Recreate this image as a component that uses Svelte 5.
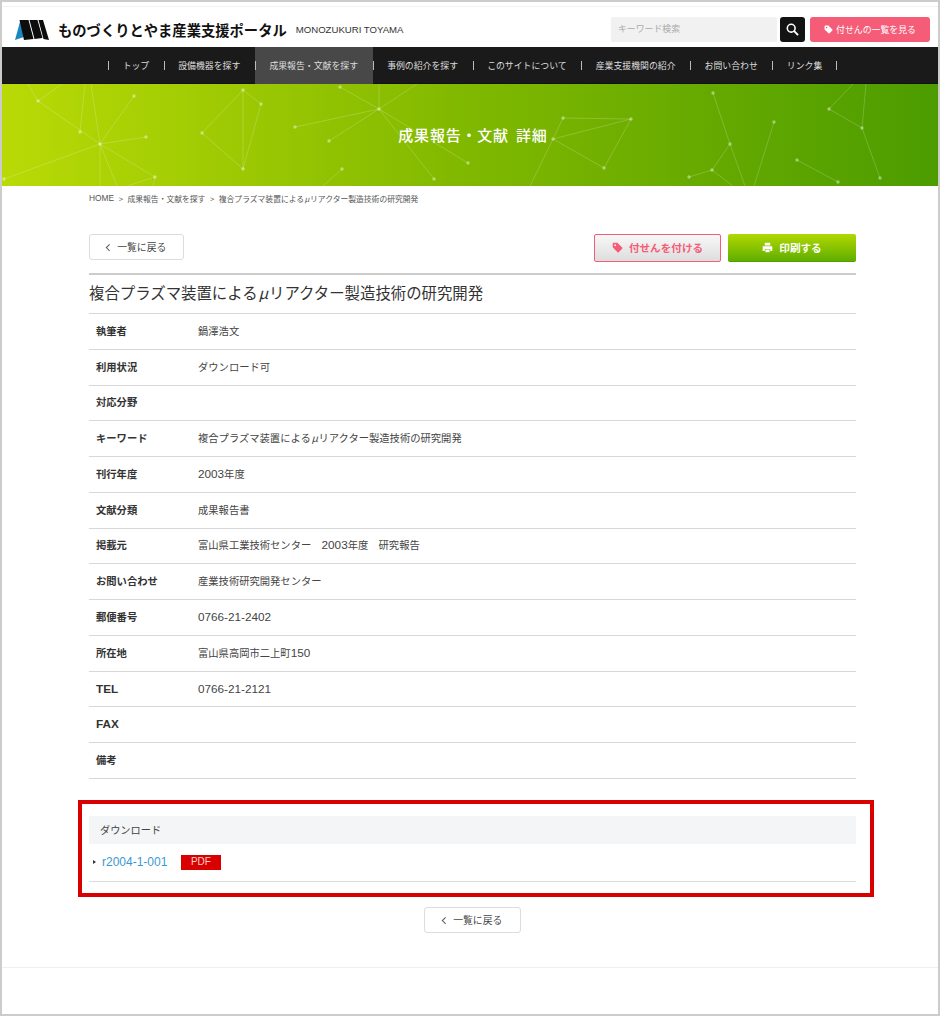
<script>
  const navItems = ['トップ', '設備機器を探す', '成果報告・文献を探す', '事例の紹介を探す', 'このサイトについて', '産業支援機関の紹介', 'お問い合わせ', 'リンク集'];
  const activeNav = '成果報告・文献を探す';
  const title = '複合プラズマ装置によるμリアクター製造技術の研究開発';

  const rows = [
    ['執筆者', '鍋澤浩文'],
    ['利用状況', 'ダウンロード可'],
    ['対応分野', ''],
    ['キーワード', title],
    ['刊行年度', '2003年度'],
    ['文献分類', '成果報告書'],
    ['掲載元', '富山県工業技術センター　2003年度　研究報告'],
    ['お問い合わせ', '産業技術研究開発センター'],
    ['郵便番号', '0766-21-2402'],
    ['所在地', '富山県高岡市二上町150'],
    ['TEL', '0766-21-2121'],
    ['FAX', ''],
    ['備考', '']
  ];

  // latin and digits sit larger than the kana in the original, mu is slanted
  const runs = (text) =>
    text
      .split(/([A-Za-z0-9-]+|μ)/)
      .filter(Boolean)
      .map((t) => ({ t, cls: t === 'μ' ? 'mu' : /^[A-Za-z0-9-]+$/.test(t) ? 'latin' : '' }));

  // banner constellation, coordinates relative to the banner box
  const dots = [
    [38, 17], [134, 12], [80, 48], [100, 60], [146, 53], [4, 95], [155, 93],
    [243, 6], [261, 20], [202, 49], [243, 85],
    [379, 25], [295, 43], [329, 57], [340, 3], [342, 85], [434, 95], [468, 79],
    [563, 34], [631, 35], [553, 55], [604, 84],
    [713, 9], [730, 60], [712, 86], [689, 93], [774, 38],
    [829, 25], [862, 44], [880, 94], [797, 76], [838, 98]
  ];
  const lines = [
    [28, 0, 38, 17], [38, 17, 62, 0], [38, 17, 100, 60], [100, 60, 91, 0], [80, 48, 85, 0],
    [100, 60, 134, 12], [100, 60, 146, 53], [100, 60, 4, 95], [100, 60, 155, 93],
    [100, 60, 100, 102], [100, 60, 117, 102], [155, 93, 127, 102], [155, 93, 153, 102],
    [243, 6, 261, 20], [243, 6, 202, 49], [243, 6, 243, 85], [261, 20, 243, 85], [202, 49, 243, 85],
    [379, 25, 295, 43], [379, 25, 329, 57], [379, 25, 340, 3], [379, 25, 379, 0], [379, 25, 417, 0],
    [379, 25, 434, 95], [342, 85, 323, 102], [379, 25, 468, 79],
    [563, 34, 631, 35], [631, 35, 553, 55], [631, 35, 604, 84], [553, 55, 604, 84], [553, 55, 563, 34], [553, 55, 530, 102],
    [713, 9, 730, 60], [730, 60, 745, 102], [730, 60, 712, 86], [712, 86, 689, 93], [712, 86, 733, 102], [774, 38, 754, 102],
    [829, 25, 853, 0], [862, 44, 866, 0], [829, 25, 862, 44], [862, 44, 880, 94], [797, 76, 838, 98]
  ];
</script>

{#snippet tagIcon(size)}
  <svg width={size} height={size} viewBox="0 0 16 16"><path fill="currentColor" d="M1 2.2 2.2 1h5.6l7 7a1.3 1.3 0 0 1 0 1.8l-5 5a1.3 1.3 0 0 1-1.8 0l-7-7zM4.6 3.2a1.4 1.4 0 1 0 0 2.8 1.4 1.4 0 0 0 0-2.8z" fill-rule="evenodd"/></svg>
{/snippet}

{#snippet backButton()}
  <a class="back" href="#top"><span class="chev"></span>一覧に戻る</a>
{/snippet}

{#snippet mixed(text)}
  {#each runs(text) as run}<span class={run.cls}>{run.t}</span>{/each}
{/snippet}

<div class="frame">
  <header class="header">
    <div class="brand">
      <svg class="logo" width="35" height="22" viewBox="0 0 35 22">
        <polygon fill="#1b87c0" points="0,21 5.5,1 9,1 9,18" />
        <polygon fill="#0d0d0d" points="4.5,1 13.5,1 18.5,20 9,21" />
        <polygon fill="#0d0d0d" points="14.5,1 22.5,1 27.5,19 19.5,20" />
        <polygon fill="#0d0d0d" points="23.5,1 28,1 34,21 28.5,20" />
      </svg>
      <span class="brand-name">ものづくりとやま産業支援ポータル</span>
      <span class="brand-en">MONOZUKURI TOYAMA</span>
    </div>
    <div class="tools">
      <div class="search">キーワード検索</div>
      <button class="search-btn" aria-label="検索">
        <svg width="13" height="13" viewBox="0 0 14 14"><circle cx="5.6" cy="5.6" r="4.2" fill="none" stroke="#fff" stroke-width="1.7"/><path d="M8.8 8.8 13 13" stroke="#fff" stroke-width="2.1"/></svg>
      </button>
      <a class="tag-list" href="#top">{@render tagIcon(9)}付せんの一覧を見る</a>
    </div>
  </header>

  <nav class="nav">
    {#each navItems as item}
      <a class="nav-item" class:active={item === activeNav} href="#top">{item}</a>
    {/each}
  </nav>

  <div class="banner">
    <svg class="network" width="936" height="102" viewBox="2 0 936 102">
      {#each lines as [x1, y1, x2, y2]}
        <line {x1} {y1} {x2} {y2} stroke="#fff" stroke-opacity="0.24" stroke-width="0.8" />
      {/each}
      {#each dots as [cx, cy]}
        <circle {cx} {cy} r="1.7" fill="#fff" fill-opacity="0.42" />
      {/each}
    </svg>
    <h1>成果報告・文献 詳細</h1>
  </div>

  <main class="main">
    <div class="crumbs">
      <span>HOME</span><i>&gt;</i><span>成果報告・文献を探す</span><i>&gt;</i><span>{@render mixed(title)}</span>
    </div>

    <div class="actions">
      {@render backButton()}
      <div class="action-right">
        <a class="btn-tag" href="#top">{@render tagIcon(11)}付せんを付ける</a>
        <a class="btn-print" href="#top">
          <svg width="11" height="11" viewBox="0 0 16 16"><path fill="currentColor" d="M4 1h8v4H4zM1 6h14v7h-3v-3H4v3H1zM5 11h6v4H5z"/></svg>
          印刷する
        </a>
      </div>
    </div>

    <h2 class="title">{@render mixed(title)}</h2>

    <div class="table">
      {#each rows as [label, value]}
        <div class="row">
          <div class="label">{@render mixed(label)}</div>
          <div class="value">{@render mixed(value)}</div>
        </div>
      {/each}
    </div>

    <section class="download">
      <h3>ダウンロード</h3>
      <div class="file">
        <span class="marker"></span>
        <a href="#top">r2004-1-001</a>
        <span class="pdf">PDF</span>
      </div>
    </section>

    <div class="bottom-back">
      {@render backButton()}
    </div>
  </main>

  <footer class="footer"></footer>
</div>

<style>
  :global(body) {
    margin: 0;
    background: #fff;
  }

  .frame {
    box-sizing: border-box;
    width: 940px;
    height: 1016px;
    border: 2px solid #ccc;
    overflow: hidden;
    font-family: "Noto Sans CJK JP", "Noto Sans", sans-serif;
    color: #333;
    background: #fff;
  }

  a {
    text-decoration: none;
    color: inherit;
  }

  .header {
    box-sizing: border-box;
    height: 41px;
    display: flex;
    align-items: center;
    justify-content: space-between;
    padding: 5px 8px 0 13px;
    border-top: 1px solid #f2f2f2;
    margin-top: 4px;
  }

  .brand {
    display: flex;
    align-items: center;
  }

  .logo {
    margin-right: 8px;
  }

  .brand-name {
    font-size: 14.3px;
    font-weight: 700;
    color: #111;
    line-height: 22px;
    white-space: nowrap;
  }

  .brand-en {
    font-family: "Liberation Sans", sans-serif;
    font-size: 9.6px;
    color: #333;
    margin-left: 9px;
    white-space: nowrap;
  }

  .tools {
    display: flex;
    align-items: center;
    margin-top: -1px;
  }

  .search {
    box-sizing: border-box;
    width: 166px;
    height: 25px;
    padding-left: 7px;
    line-height: 24px;
    font-size: 8.9px;
    color: #aaa;
    background: #f1f1f1;
    border-radius: 2px;
  }

  .search-btn {
    box-sizing: border-box;
    width: 25px;
    height: 25px;
    margin-left: 3px;
    padding: 0;
    border: 0;
    border-radius: 3px;
    background: #131313;
    display: flex;
    align-items: center;
    justify-content: center;
  }

  .tag-list {
    box-sizing: border-box;
    width: 120px;
    height: 25px;
    margin-left: 5px;
    display: flex;
    align-items: center;
    justify-content: center;
    gap: 3px;
    font-size: 8.9px;
    color: #fff;
    background: #f45c77;
    border-radius: 3px;
  }

  .nav {
    height: 37px;
    display: flex;
    justify-content: center;
    background: #1a1a1a;
    padding-left: 5px;
    box-shadow: inset 0 -1px 0 #111;
  }

  .nav-item {
    position: relative;
    display: flex;
    align-items: center;
    padding: 0 14.5px;
    font-size: 8.9px;
    color: #ddd;
    white-space: nowrap;
  }

  .nav-item.active {
    background: #484848;
  }

  .nav-item::before,
  .nav-item:last-child::after {
    content: "";
    position: absolute;
    left: 0;
    top: 14px;
    width: 1px;
    height: 9px;
    background: #bbb;
  }

  .nav-item:last-child::after {
    left: auto;
    right: 0;
  }

  .banner {
    position: relative;
    height: 102px;
    display: flex;
    align-items: center;
    justify-content: center;
    overflow: hidden;
    background: linear-gradient(90deg, #b9da06 0%, #80b800 50%, #4c9c00 100%);
  }

  .network {
    position: absolute;
    inset: 0;
  }

  .banner h1 {
    position: relative;
    margin: 0 0 2px 6px;
    font-size: 15px;
    font-weight: 500;
    letter-spacing: 0.8px;
    word-spacing: 3px;
    color: #fff;
  }

  .main {
    width: 767px;
    margin-left: 87px;
  }

  .crumbs {
    height: 24px;
    display: flex;
    align-items: center;
    font-size: 7.8px;
    color: #555;
    white-space: nowrap;
  }

  .crumbs > span:first-child {
    font-family: "Liberation Sans", sans-serif;
    font-size: 8.4px;
  }

  .crumbs i {
    font-style: normal;
    margin: 0 4.5px;
  }

  .actions {
    display: flex;
    justify-content: space-between;
    align-items: flex-start;
    margin-top: 24px;
  }

  .back {
    box-sizing: border-box;
    width: 95px;
    height: 26px;
    display: flex;
    align-items: center;
    justify-content: center;
    gap: 6px;
    font-size: 9.8px;
    color: #444;
    background: #fff;
    border: 1px solid #dcdcdc;
    border-radius: 3px;
  }

  .chev {
    width: 3.5px;
    height: 3.5px;
    border-left: 1px solid #555;
    border-bottom: 1px solid #555;
    transform: rotate(45deg);
  }

  .action-right {
    display: flex;
    gap: 7px;
  }

  .btn-tag,
  .btn-print {
    box-sizing: border-box;
    height: 28px;
    padding-bottom: 1px;
    display: flex;
    align-items: center;
    justify-content: center;
    gap: 6px;
    font-size: 10.6px;
    font-weight: 700;
    border-radius: 2px;
  }

  .btn-tag {
    width: 127px;
    color: #f45c77;
    border: 1.5px solid #f45c77;
    background: linear-gradient(180deg, #f8f8f8, #dddddd);
  }

  .btn-print {
    width: 128px;
    color: #fff;
    background: linear-gradient(180deg, #b2d800, #60ae00);
    border-bottom: 1px solid #4fa000;
  }

  .title {
    box-sizing: border-box;
    height: 41px;
    margin: 11px 0 0;
    padding-bottom: 5px;
    display: flex;
    align-items: center;
    font-size: 15.4px;
    font-weight: 400;
    color: #333;
    border-top: 2px solid #ccc;
    border-bottom: 1px solid #d8d8d8;
    white-space: nowrap;
  }

  .row {
    box-sizing: border-box;
    height: 35.77px;
    padding-bottom: 2px;
    display: grid;
    grid-template-columns: 102px 1fr;
    align-items: center;
    padding-left: 7px;
    border-bottom: 1px solid #d8d8d8;
    font-size: 10.3px;
  }

  .label {
    font-weight: 700;
    color: #333;
  }

  .value {
    color: #444;
  }

  .latin {
    font-family: "Liberation Sans", sans-serif;
    font-size: 1.14em;
  }

  .mu {
    font-style: italic;
    margin: 0 0.06em;
  }

  .download {
    position: relative;
    margin-top: 37px;
  }

  /* red annotation frame around the download block */
  .download::after {
    content: "";
    position: absolute;
    inset: -16px -18px -15px -11px;
    border: 4px solid #d90000;
    pointer-events: none;
  }

  .download h3 {
    height: 28px;
    margin: 0;
    padding-left: 11px;
    line-height: 27px;
    font-size: 10.2px;
    font-weight: 400;
    color: #444;
    background: #f4f5f7;
  }

  .file {
    height: 37px;
    display: flex;
    align-items: center;
    padding-left: 4px;
    border-bottom: 1px solid #ddd;
  }

  .marker {
    width: 0;
    height: 0;
    margin-right: 6px;
    border-left: 3px solid #333;
    border-top: 2px solid transparent;
    border-bottom: 2px solid transparent;
  }

  .file a {
    font-family: "Liberation Sans", sans-serif;
    font-size: 12px;
    color: #3b99d3;
  }

  .pdf {
    box-sizing: border-box;
    width: 40px;
    height: 15px;
    margin-left: 13.5px;
    text-align: center;
    line-height: 14px;
    font-family: "Liberation Sans", sans-serif;
    font-size: 10px;
    color: #fbd0d0;
    background: #d90000;
  }

  .bottom-back {
    display: flex;
    justify-content: center;
    margin-top: 25px;
  }

  .bottom-back .back {
    width: 97px;
  }

  .footer {
    margin-top: 34px;
    border-top: 1px solid #f0f0f0;
  }
</style>
